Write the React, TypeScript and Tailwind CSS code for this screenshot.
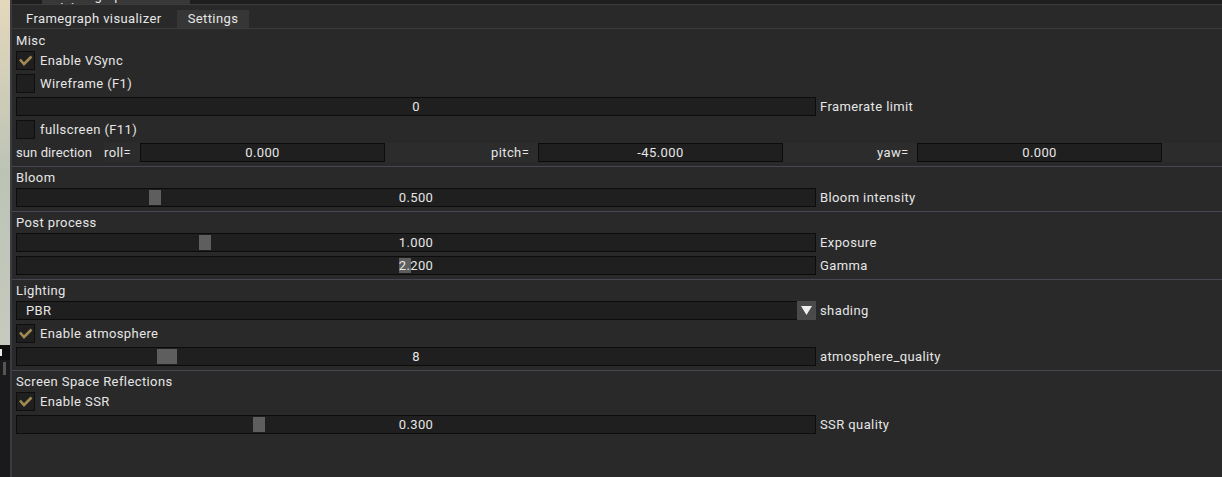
import React from "react";

const Check = () => (
    <svg width="19" height="19" viewBox="0 0 19 19" className="block">
        <polyline points="4,8.5 8,13 15.5,5.5" fill="none" stroke="#a08a52" strokeWidth="2.6" />
    </svg>
);

const Checkbox = ({ checked, label }: { checked?: boolean; label: string }) => (
    <div className="flex items-center h-[19px] gap-[5px]">
        <div className="w-[19px] h-[19px] bg-[#1f1f1f] border border-[#0e0e0e]">
            {checked && <div className="-m-px"><Check /></div>}
        </div>
        <span>{label}</span>
    </div>
);

const SectionTitle = ({ children }: { children: React.ReactNode }) => (
    <div className="h-[13px] leading-[13px]">{children}</div>
);

const Separator = () => <div className="h-px bg-[#47474f] -ml-[4px]" />;

// slider frame with the grab knob drawn over it
const Slider = ({ value, label, grab, grabW = "w-[12px]" }: { value: string; label: string; grab: string; grabW?: string }) => (
    <div className="flex items-center h-[19px] gap-[4px]">
        <div className="relative w-[800px] h-[19px] bg-[#1f1f1f] border border-[#0c0c0c] flex items-center justify-center">
            {grab && <div className={`absolute top-[1px] bottom-[1px] ${grabW} ${grab} bg-[#5e5e5e]`} />}
            <span className="relative">{value}</span>
        </div>
        <span>{label}</span>
    </div>
);

const Input = ({ value }: { value: string }) => (
    <div className="w-[245px] h-[19px] bg-[#1f1f1f] border border-[#0c0c0c] flex items-center justify-center">
        {value}
    </div>
);

export default function App() {
    return (
        <div
            className="w-[1222px] h-[477px] flex bg-[#292929] overflow-hidden text-[13px] tracking-[0.4px] text-[#e6e6e6]"
            style={{ fontFamily: "Roboto, 'Noto Sans', sans-serif" }}
        >
            {/* background viewport peeking out on the left */}
            <div className="w-[10px] flex flex-col">
                <div className="h-[345px] bg-linear-to-b from-[#e4d8bc] via-[#bcc3b5] to-[#c6cabe]" />
                <div className="h-[15px] bg-[#0f0f0f] pt-[4px]">
                    <div className="w-[2px] h-[7px] bg-[#e8e8e8]" />
                </div>
                <div className="flex-1 bg-[#1a1a1a] pl-[3px] pt-[2px]">
                    <div className="w-[3px] h-[13px] bg-[#555555]" />
                </div>
            </div>
            <div className="w-[2px] bg-[#3a3a42]" />

            <div className="flex-1 flex flex-col">
                {/* window tab strip, mostly cut off */}
                <div className="h-[4px] bg-[#1e1e1e] flex pl-[30px] overflow-hidden">
                    <div className="w-[148px] h-[4px] bg-[#383838] overflow-hidden">
                        <div className="-mt-[11px] pl-[14px] leading-[13px]">Framegraph debugger</div>
                    </div>
                </div>
                <div className="h-px bg-[#3c3c3c]" />
                <div className="h-[23px] flex items-end pl-[2px]">
                    <div className="h-[18px] w-[163px] pl-[12px] flex items-center">Framegraph visualizer</div>
                    <div className="h-[18px] w-[72px] bg-[#363636] flex items-center justify-center">Settings</div>
                </div>
                <div className="h-px bg-[#3c3c3c]" />

                <div className="flex flex-col gap-[4px] pt-[5px] pl-[4px]">
                    <SectionTitle>Misc</SectionTitle>
                    <Checkbox checked label="Enable VSync" />
                    <Checkbox label="Wireframe (F1)" />
                    <Slider value="0" label="Framerate limit" grab="" />
                    <Checkbox label="fullscreen (F11)" />
                    <div className="flex items-center h-[19px]">
                        <span className="w-[88px] tracking-[0.1px]">sun direction</span>
                        <div className="flex-1 flex items-center h-[19px] bg-[#2c2c2c]">
                            <span className="w-[36px]">roll=</span>
                            <Input value="0.000" />
                            <span className="ml-[106px] w-[47px]">pitch=</span>
                            <Input value="-45.000" />
                            <span className="ml-[94px] w-[40px]">yaw=</span>
                            <Input value="0.000" />
                        </div>
                    </div>
                    <Separator />
                    <SectionTitle>Bloom</SectionTitle>
                    <Slider value="0.500" label="Bloom intensity" grab="left-[132px]" />
                    <Separator />
                    <SectionTitle>Post process</SectionTitle>
                    <Slider value="1.000" label="Exposure" grab="left-[182px]" />
                    <Slider value="2.200" label="Gamma" grab="left-[382px]" />
                    <Separator />
                    <SectionTitle>Lighting</SectionTitle>
                    <div className="flex items-center h-[19px] gap-[4px]">
                        <div className="w-[800px] h-[19px] bg-[#1f1f1f] border border-[#0c0c0c] flex items-center">
                            <span className="flex-1 pl-[9px]">PBR</span>
                            <div className="w-[19px] h-[19px] -my-px -mr-px bg-[#4a4a4a] flex items-center justify-center">
                                <svg width="11" height="9" viewBox="0 0 11 9">
                                    <polygon points="0,0 11,0 5.5,9" fill="#f0f0f0" />
                                </svg>
                            </div>
                        </div>
                        <span>shading</span>
                    </div>
                    <Checkbox checked label="Enable atmosphere" />
                    <Slider value="8" label="atmosphere_quality" grab="left-[140px]" grabW="w-[20px]" />
                    <Separator />
                    <SectionTitle>Screen Space Reflections</SectionTitle>
                    <Checkbox checked label="Enable SSR" />
                    <Slider value="0.300" label="SSR quality" grab="left-[236px]" />
                </div>
            </div>
        </div>
    );
}
